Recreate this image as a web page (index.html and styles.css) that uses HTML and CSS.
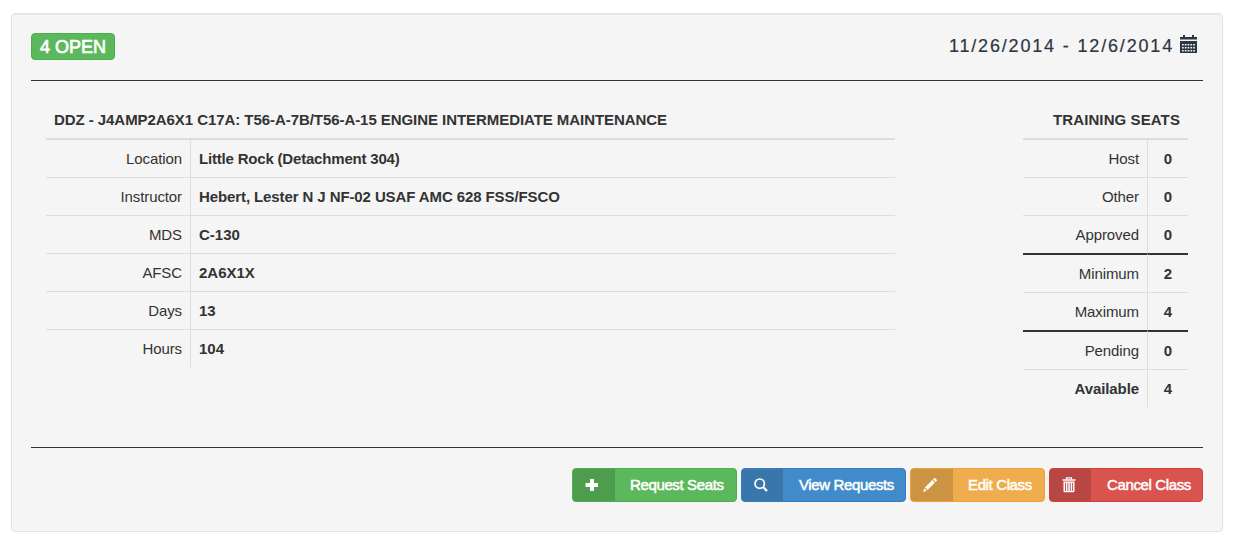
FILE: index.html
```html
<!DOCTYPE html>
<html lang="en">
<head>
<meta charset="utf-8">
<title>Class details</title>
<link rel="stylesheet" href="styles.css">
</head>
<body>
<main class="well">
  <header class="well-header">
    <span class="badge">4 OPEN</span>
    <div class="dates"><span>11/26/2014 - 12/6/2014</span>
      <svg class="calendar" width="17" height="18" viewBox="0 0 17 18">
        <path fill="#2d3643" fill-rule="evenodd" d="M0 2h3V0h2v2h7V0h2v2h3v2.5H0zM0 6h17v12H0zM2 9v1.5h1.7V9zM4.8 9v1.5h1.7V9zM7.6 9v1.5h1.7V9zM10.4 9v1.5h1.7V9zM13.2 9v1.5h1.7V9zM2 12v1.5h1.7V12zM4.8 12v1.5h1.7V12zM7.6 12v1.5h1.7V12zM10.4 12v1.5h1.7V12zM13.2 12v1.5h1.7V12zM2 15v1.5h1.7V15zM4.8 15v1.5h1.7V15zM7.6 15v1.5h1.7V15zM10.4 15v1.5h1.7V15zM13.2 15v1.5h1.7V15z"/>
      </svg>
    </div>
  </header>
  <section class="content">
    <table class="table details">
      <colgroup><col class="label-col"><col></colgroup>
      <thead><tr><th colspan="2"><span class="course">DDZ - J4AMP2A6X1 C17A: T56-A-7B/T56-A-15 ENGINE INTERMEDIATE MAINTENANCE</span></th></tr></thead>
      <tbody>
        <tr><td>Location</td><td><span class="place">Little Rock (Detachment 304)</span></td></tr>
        <tr><td>Instructor</td><td><span class="person">Hebert, Lester N J NF-02 USAF AMC 628 FSS/FSCO</span></td></tr>
        <tr><td>MDS</td><td>C-130</td></tr>
        <tr><td>AFSC</td><td>2A6X1X</td></tr>
        <tr><td>Days</td><td>13</td></tr>
        <tr><td>Hours</td><td>104</td></tr>
      </tbody>
    </table>
    <table class="table seats">
      <colgroup><col class="label-col"><col></colgroup>
      <thead><tr><th colspan="2"><span class="seats-title">TRAINING SEATS</span></th></tr></thead>
      <tbody>
        <tr><td>Host</td><td>0</td></tr>
        <tr><td>Other</td><td>0</td></tr>
        <tr><td>Approved</td><td>0</td></tr>
        <tr class="divide"><td>Minimum</td><td>2</td></tr>
        <tr><td>Maximum</td><td>4</td></tr>
        <tr class="divide"><td>Pending</td><td>0</td></tr>
        <tr class="total"><td>Available</td><td>4</td></tr>
      </tbody>
    </table>
  </section>
  <footer class="actions">
    <button class="btn request"><span class="btn-icon"><svg width="14" height="14" viewBox="0 0 14 14"><path fill="#fff" d="M5 1h4v4h4v4H9v4H5V9H.5V5H5z"/></svg></span><span class="btn-text">Request Seats</span></button>
    <button class="btn view"><span class="btn-icon"><svg width="14" height="14" viewBox="0 0 14 14"><circle cx="5.7" cy="5.7" r="4.7" fill="none" stroke="#fff" stroke-width="1.7"/><path d="M9 9l4 4" stroke="#fff" stroke-width="2.3"/></svg></span><span class="btn-text">View Requests</span></button>
    <button class="btn edit"><span class="btn-icon"><svg width="14" height="14" viewBox="0 0 14 14"><path fill="#fff" d="M11.2.2q.6-.4 1.1.1l1.4 1.4q.5.5.1 1.1l-1.2 1.2L10 1.4zM9.3 2.1l2.6 2.6-7.4 7.4-2.6-2.6zM1.2 10.3l2.5 2.5L0 14z"/></svg></span><span class="btn-text">Edit Class</span></button>
    <button class="btn cancel"><span class="btn-icon"><svg width="14" height="16" viewBox="0 0 14 16"><path fill="none" stroke="#fff" stroke-width="1.2" d="M4.5 2.4V.8h5v1.6"/><path fill="#fff" fill-rule="evenodd" d="M.5 2.2h13v1.6H.5zM1.5 4.6h11V14q0 1.3-1.3 1.3H2.8Q1.5 15.3 1.5 14zM3 5.8V14h.9V5.8zM5.4 5.8V14h.9V5.8zM7.8 5.8V14h.9V5.8zM10.2 5.8V14h.9V5.8z"/></svg></span><span class="btn-text">Cancel Class</span></button>
  </footer>
</main>
</body>
</html>
```
FILE: styles.css
```css
* { box-sizing: border-box; }
body {
  margin: 0;
  background: #fff;
  color: #333;
  font: 15px/21px "Liberation Sans", Arial, sans-serif;
}
.well {
  width: 1212px;
  height: 519px;
  margin: 13px 0 0 11px;
  padding: 19px;
  border: 1px solid #e3e3e3;
  border-radius: 4px;
  background: #f5f5f5;
  box-shadow: inset 0 1px 1px rgba(0, 0, 0, .05);
}
.well-header {
  display: flex;
  justify-content: space-between;
  align-items: flex-start;
  height: 48px;
  border-bottom: 1px solid #333;
}
.badge {
  width: 84px;
  height: 27px;
  border: 1px solid #4cae4c;
  border-radius: 4px;
  background: #5cb85c;
  color: #fff;
  font-size: 18px;
  line-height: 26px;
  text-align: center;
  -webkit-text-stroke: .7px #fff;
}
.dates {
  display: flex;
  gap: 6px;
  padding: 2px 6px 0 0;
  color: #2d3643;
  font-size: 18px;
  line-height: 22px;
  letter-spacing: 1.83px;
  -webkit-text-stroke: .2px #2d3643;
}
.calendar { -webkit-text-stroke: 0; }
.content {
  display: flex;
  justify-content: space-between;
  height: 367px;
  padding: 20px 15px 0;
  border-bottom: 1px solid #333;
}
.table {
  align-self: flex-start;
  border-spacing: 0;
  table-layout: fixed;
}
.details { width: 849px; }
.details .label-col { width: 144px; }
.seats { width: 165px; }
.seats .label-col { width: 124px; }
.table th {
  height: 39px;
  padding: 0 8px;
  border-bottom: 2px solid #ddd;
  text-align: left;
  white-space: nowrap;
}
.table.seats th { text-align: right; }
.course { letter-spacing: -.06px; }
.place { letter-spacing: -.19px; }
.person { letter-spacing: -.1px; }
.seats-title { letter-spacing: .1px; }
.table td {
  height: 38px;
  padding: 0 8px 1px;
  border-top: 1px solid #ddd;
  white-space: nowrap;
}
.table tbody tr:first-child td { height: 37px; border-top: 0; }
.table td:first-child { text-align: right; letter-spacing: -.1px; }
.table td:last-child { border-left: 1px solid #ddd; font-weight: bold; }
.seats td:last-child { text-align: center; }
.table .divide td { height: 39px; border-top: 2px solid #333; }
.total td { font-weight: bold; }
.actions {
  display: flex;
  justify-content: flex-end;
  gap: 4px;
  padding-top: 20px;
}
.btn {
  display: flex;
  height: 34px;
  padding: 0;
  overflow: hidden;
  border: 1px solid;
  border-radius: 4px;
  color: #fff;
  font: 15px/32px "Liberation Sans", Arial, sans-serif;
  letter-spacing: -.37px;
  -webkit-text-stroke: .5px #fff;
}
.btn-icon {
  display: flex;
  flex: none;
  align-items: center;
  width: 42px;
  height: 32px;
  padding-left: 12px;
  background: rgba(0, 0, 0, .15);
}
.view .btn-icon, .cancel .btn-icon { width: 41px; }
.btn-text { flex: 1; padding-left: 15px; text-align: left; white-space: nowrap; }
.view .btn-text, .cancel .btn-text { padding-left: 16px; }
.request, .view { width: 165px; }
.edit { width: 135px; }
.cancel { width: 154px; }
.request { background: #5cb85c; border-color: #4cae4c; }
.view { background: #428bca; border-color: #357ebd; }
.edit { background: #f0ad4e; border-color: #eea236; }
.cancel { background: #d9534f; border-color: #d43f3a; }
```
